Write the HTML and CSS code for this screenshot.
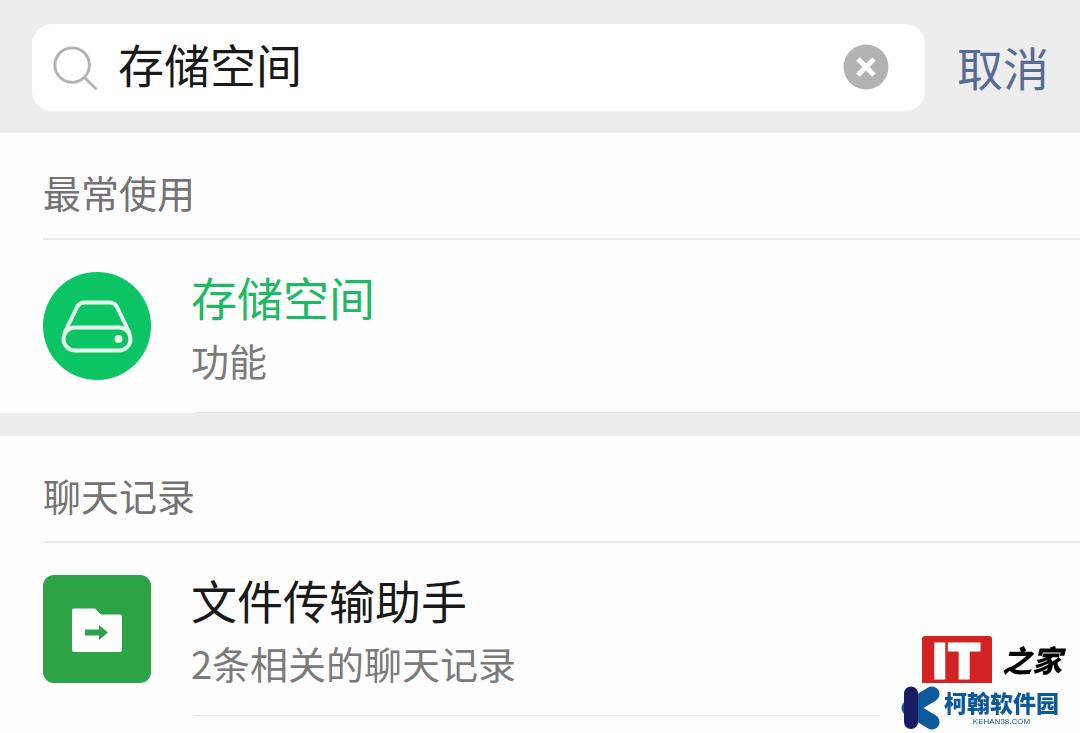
FILE: index.html
```html
<!DOCTYPE html>
<html lang="zh-CN">
<head>
  <meta charset="UTF-8" />
  <meta name="viewport" content="width=device-width, initial-scale=1" />
  <title>存储空间</title>
  <link rel="stylesheet" href="styles.css">
</head>
<body>

<header class="search-bar">
  <form class="search-box" role="search">
    <svg class="search-icon" viewBox="0 0 48 48" aria-hidden="true">
      <circle cx="21" cy="22" r="18" />
      <path d="M33.500 34.500L46.500 47.500" />
    </svg>
    <input class="search-input" type="text" aria-label="搜索" value="存储空间" />
    <button class="clear-btn" type="reset" aria-label="清除">
      <svg viewBox="0 0 46 46" aria-hidden="true">
        <circle cx="23" cy="23" r="22.500" />
        <path d="M15 15L31 31M31 15L15 31" />
      </svg>
    </button>
  </form>
  <button class="cancel-btn" type="button">取消</button>
</header>

<main>
  <section class="group">
    <h2>最常使用</h2>
    <a class="row" href="#storage">
      <svg class="avatar" viewBox="0 0 108 108" aria-hidden="true">
        <circle cx="54" cy="54" r="54" fill="#0bc564" />
        <g fill="none" stroke="#e6fbee" stroke-width="4" stroke-linejoin="round">
          <path d="M21.500 61L34 35Q36.500 30.500 41.500 30.500H66.500Q71.500 30.500 74 35L86.500 61" />
          <rect x="20.500" y="55.500" width="67" height="23" rx="11.500" />
        </g>
        <circle cx="75.500" cy="67" r="4" fill="#e6fbee" />
      </svg>
      <span class="row-text">
        <span class="row-title match">存储空间</span>
        <span class="row-desc">功能</span>
      </span>
    </a>
  </section>

  <section class="group">
    <h2>聊天记录</h2>
    <a class="row" href="#filehelper">
      <svg class="avatar" viewBox="0 0 108 108" aria-hidden="true">
        <rect width="108" height="108" rx="11" fill="#2ca347" />
        <path d="M31 33.500H52L58 39.500H77Q79 39.500 79 41.500V75Q79 77 77 77H31Q29 77 29 75V35.500Q29 33.500 31 33.500Z" fill="#fff" />
        <path d="M42 54.500H56V50L65 57.500L56 65V60.500H42Z" fill="#2ca347" />
      </svg>
      <span class="row-text">
        <span class="row-title">文件传输助手</span>
        <span class="row-desc">2条相关的聊天记录</span>
      </span>
    </a>
  </section>
</main>

<!-- site marks over the bottom right corner -->
<div class="watermark">
  <div class="mark-it">
    <span class="it-box">IT</span>
    <span class="it-name">之家</span>
  </div>
  <div class="mark-kehan">
    <svg class="kehan-logo" viewBox="0 0 40 44" aria-hidden="true">
      <g fill="none" stroke-linecap="round">
        <path d="M31 8L8 22L31 36" stroke="#0b5a9c" stroke-width="15" stroke-linejoin="round" />
        <path d="M10 7.500V36" stroke="#171c62" stroke-width="14" />
      </g>
    </svg>
    <div class="kehan-text">
      <span class="kehan-name">柯翰软件园</span>
      <span class="kehan-url">KEHAN38.COM</span>
    </div>
  </div>
</div>

</body>
</html>
```

FILE: styles.css
```css
* {
  margin: 0;
  padding: 0;
  box-sizing: border-box;
}

body {
  font-family: "Noto Sans CJK SC", sans-serif;
  background: #fefefe;
  color: #191919;
}

button {
  border: none;
  background: none;
  font-family: inherit;
  cursor: pointer;
}

.search-bar {
  display: flex;
  align-items: center;
  gap: 32px;
  padding: 24px 31px 22px 32px;
  background: #ededed;
}

.search-box {
  flex: 1;
  min-width: 0;
  display: flex;
  align-items: center;
  gap: 20px;
  padding: 8px 36px 9px 20px;
  background: #fff;
  border-radius: 20px;
}

.search-icon {
  flex: none;
  width: 46px;
  height: 46px;
  fill: none;
  stroke: #b2b2b2;
  stroke-width: 3;
}

.search-input {
  flex: 1;
  min-width: 0;
  height: 70px;
  padding-bottom: 8px;
  border: none;
  outline: none;
  background: none;
  color: #191919;
  font-family: inherit;
  font-size: 46px;
}

.clear-btn {
  flex: none;
  width: 46px;
  height: 46px;
}

.clear-btn svg {
  display: block;
  fill: #b2b2b2;
  stroke: #fff;
  stroke-width: 5;
}

.clear-btn circle {
  stroke: none;
}

.cancel-btn {
  padding-bottom: 4px;
  color: #576b95;
  font-size: 46px;
  line-height: 60px;
}

.group + .group {
  border-top: 23px solid #ededed;
}

.group h2 {
  margin-left: 43px;
  padding: 31px 0 18px;
  border-bottom: 2px solid #e8e8e8;
  color: #737373;
  font-size: 38px;
  font-weight: 400;
  line-height: 56px;
}

.row {
  display: flex;
  flex-wrap: wrap;
  gap: 0 40px;
  padding: 32px 0 0 43px;
  color: inherit;
  text-decoration: none;
}

.row::after {
  content: "";
  flex: 0 0 calc(100% - 152px);
  margin: 32px 0 0 152px;
  border-top: 1px solid #e4e4e4;
}

.avatar {
  flex: none;
  width: 108px;
  height: 108px;
}

.row-text {
  flex: 1;
  display: flex;
  flex-direction: column;
}

.row-title {
  font-size: 46px;
  line-height: 48px;
}

.row-title.match {
  color: #1db965;
}

.row-desc {
  margin-top: 20px;
  color: #7a7a7a;
  font-size: 38px;
  line-height: 40px;
}

.watermark {
  position: fixed;
  right: 0;
  bottom: 0;
}

.mark-it {
  display: flex;
  align-items: center;
  gap: 10px;
  padding-left: 42px;
}

.it-box {
  width: 70px;
  height: 47px;
  background: #d22222;
  border-radius: 3px 3px 0 0;
  color: #fff;
  font-family: Inter, sans-serif;
  font-size: 50px;
  font-weight: 900;
  line-height: 50px;
  text-align: center;
  -webkit-text-stroke: 1px #fff;
}

.it-name {
  color: #000;
  font-size: 30px;
  font-style: italic;
  font-weight: 900;
  line-height: 47px;
}

.mark-kehan {
  display: flex;
  gap: 3px;
  padding: 3px 21px 3px;
  background: #fefefe;
}

.kehan-logo {
  width: 40px;
  height: 44px;
}

.kehan-text {
  display: flex;
  flex-direction: column;
  align-items: center;
}

.kehan-name {
  color: #0b5a9c;
  font-size: 23px;
  font-weight: 900;
  line-height: 32px;
}

.kehan-url {
  color: #0b5a9c;
  font-family: "Liberation Sans", sans-serif;
  font-size: 8px;
  line-height: 8px;
}
```
